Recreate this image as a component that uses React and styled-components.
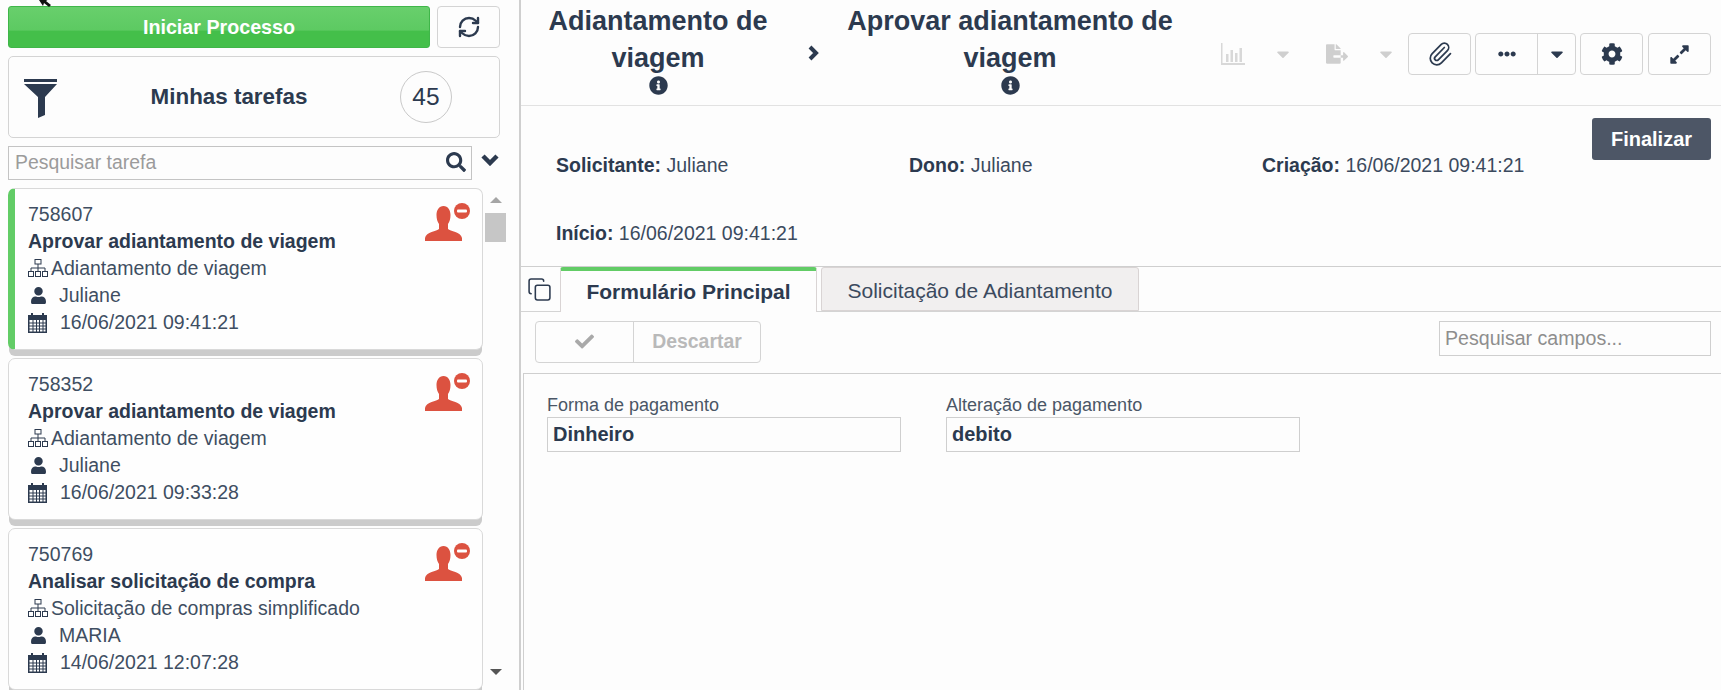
import React from 'react';
import styled, { createGlobalStyle } from 'styled-components';
import {
  FaCaretDown, FaCheck, FaCog, FaEllipsisH,
  FaExpandAlt, FaFileExport, FaInfoCircle, FaSearch, FaUser,
} from 'react-icons/fa';
import { Copy, Paperclip, RefreshCw } from 'lucide-react';

const GlobalStyle = createGlobalStyle`
  html, body {
    margin: 0;
    padding: 0;
    height: 690px;
    overflow: hidden;
    background: #fdfdfd;
    font-family: "Liberation Sans", Arial, sans-serif;
    color: #2c3a4f;
  }
  * { box-sizing: border-box; }
`;

const Page = styled.div`
  display: flex;
  position: relative;
  width: 1721px;
  height: 690px;
  overflow: hidden;
`;

const Cursor = styled.svg`
  position: absolute;
  left: 35px;
  top: -3px;
`;

/* left column */
const Sidebar = styled.aside`
  width: 521px;
  flex: none;
  padding: 6px 0 0 8px;
  border-right: 2px solid #cfcfcf;
  display: flex;
  flex-direction: column;
`;

const TopRow = styled.div`
  display: flex;
  gap: 7px;
  width: 492px;
`;

const StartButton = styled.button`
  flex: 1;
  height: 42px;
  border: 1px solid #3fb649;
  border-radius: 3px;
  background: linear-gradient(#68cf6c 0%, #5dca62 58%, #44bf4a 60%, #44bf4a 100%);
  color: #fff;
  font: bold 19.7px "Liberation Sans", Arial, sans-serif;
`;

const IconButton = styled.button`
  width: 63px;
  height: 42px;
  flex: none;
  display: flex;
  align-items: center;
  justify-content: center;
  border: 1px solid #d4d4d4;
  border-radius: 4px;
  background: #fdfdfd;
  color: #2c3a4f;
  padding: 0;
`;

const ExpandButton = styled(IconButton)`
  margin-left: 1px;
`;

const TasksBox = styled.div`
  width: 492px;
  height: 82px;
  margin-top: 8px;
  padding: 0 47px 0 15px;
  display: flex;
  align-items: center;
  border: 1px solid #d4d4d4;
  border-radius: 5px;
`;

const FunnelIcon = styled.svg`
  margin-top: 3px;
  flex: none;
`;

const TasksTitle = styled.div`
  flex: 1;
  text-align: center;
  font-size: 22.4px;
  font-weight: bold;
`;

const Counter = styled.div`
  width: 52px;
  height: 52px;
  display: flex;
  align-items: center;
  justify-content: center;
  border: 1px solid #c9c9c9;
  border-radius: 50%;
  font-size: 24.5px;
`;

const SearchRow = styled.div`
  display: flex;
  align-items: center;
  margin-top: 8px;
  width: 492px;
`;

const SearchBox = styled.div`
  width: 464px;
  height: 34px;
  padding: 0 5px 2px 6px;
  display: flex;
  align-items: center;
  justify-content: space-between;
  border: 1px solid #c4c4c4;
  font-size: 19.4px;
  color: #9b9b9b;
`;

const ChevronSlot = styled.div`
  flex: 1;
  display: flex;
  justify-content: flex-end;
  padding: 0 1px 6px 0;
`;

const ListArea = styled.div`
  display: flex;
  margin-top: 8px;
  gap: 2px;
  flex: 1;
  min-height: 0;
`;

const CardList = styled.div`
  width: 475px;
  display: flex;
  flex-direction: column;
  gap: 8px;
`;

const Card = styled.article`
  position: relative;
  flex: none;
  height: 162px;
  padding: 12px 0 0 ${props => (props.$active ? 13 : 19)}px;
  background: #fefefe;
  border: 1px solid #d9d9d9;
  border-left: ${props => (props.$active ? '7px solid #62cc66' : '1px solid #d9d9d9')};
  border-radius: 7px;
  box-shadow: 0 7px 0 -1px #cbcbcb;
  font-size: 19.5px;
  color: #3f4e62;
`;

const CardLine = styled.div`
  height: 27px;
  line-height: 27px;
  display: flex;
  align-items: center;
  white-space: nowrap;
`;

const CardTitle = styled(CardLine)`
  font-weight: bold;
  color: #2c3a4f;
`;

const LineIcon = styled.span`
  width: ${props => props.$width}px;
  flex: none;
  display: flex;
  align-items: center;
  color: #2c3a4f;
`;

const OwnerMark = styled.svg`
  position: absolute;
  right: 12px;
  top: 14px;
`;

const Scrollbar = styled.div`
  width: 21px;
  position: relative;
`;

const ScrollArrow = styled.div`
  position: absolute;
  left: 5px;
  width: 0;
  height: 0;
  border-left: 6px solid transparent;
  border-right: 6px solid transparent;
  ${props => (props.$down
    ? 'top: 481px; border-top: 6px solid #555;'
    : 'top: 9px; border-bottom: 6px solid #a5a5a5;')}
`;

const ScrollThumb = styled.div`
  margin-top: 25px;
  height: 29px;
  background: #c6c6c6;
`;

/* right column */
const Main = styled.main`
  flex: 1;
  min-width: 0;
  display: flex;
  flex-direction: column;
`;

const Header = styled.header`
  height: 106px;
  padding-right: 10px;
  display: flex;
  border-bottom: 1px solid #e2e2e2;
`;

const Crumb = styled.div`
  width: ${props => props.$width}px;
  flex: none;
  text-align: center;
  font-size: 27px;
  font-weight: bold;
  line-height: 37px;
  padding-top: 3px;
`;

const CrumbInfo = styled.div`
  height: 20px;
  margin-top: -1px;
  display: flex;
  justify-content: center;
`;

const CrumbArrow = styled.div`
  width: 39px;
  flex: none;
  padding: 45px 0 0 13px;
`;

const Tools = styled.div`
  margin-left: auto;
  padding-top: 33px;
  display: flex;
  align-items: flex-start;
  gap: 4px;
`;

const GhostTool = styled.div`
  width: ${props => props.$width}px;
  height: 42px;
  flex: none;
  display: flex;
  align-items: center;
  justify-content: center;
  color: #cfcfcf;
`;

const SplitButton = styled.div`
  width: 101px;
  height: 42px;
  flex: none;
  display: flex;
  border: 1px solid #d4d4d4;
  border-radius: 4px;
`;

const SplitPart = styled.div`
  width: ${props => props.$width}px;
  display: flex;
  align-items: center;
  justify-content: center;
  border-left: ${props => (props.$divided ? '1px solid #d4d4d4' : 'none')};
`;

const Details = styled.section`
  position: relative;
  height: 161px;
  padding: 49px 0 0 35px;
  display: grid;
  grid-template-columns: 353px 353px 1fr;
  grid-auto-rows: 68px;
  font-size: 19.5px;
  color: #3b4a5e;
  border-bottom: 1px solid #cfcfcf;
`;

const Detail = styled.div`
  line-height: 21px;

  strong {
    color: #2c3a4f;
  }
`;

const FinishButton = styled.button`
  position: absolute;
  right: 10px;
  top: 12px;
  width: 119px;
  height: 42px;
  border: none;
  border-radius: 3px;
  background: #4d5666;
  color: #fff;
  font: bold 20px "Liberation Sans", Arial, sans-serif;
`;

const TabBar = styled.div`
  height: 45px;
  display: flex;
  align-items: flex-end;
  border-bottom: 1px solid #d4d4d4;
`;

const CopySlot = styled.div`
  width: 39px;
  height: 44px;
  flex: none;
  padding: 10px 0 0 6px;
`;

const Tab = styled.div`
  height: ${props => (props.$active ? 45 : 44)}px;
  width: ${props => (props.$active ? 257 : 318)}px;
  margin-left: ${props => (props.$active ? 0 : 4)}px;
  margin-bottom: ${props => (props.$active ? -1 : 0)}px;
  padding-top: ${props => (props.$active ? 1 : 3)}px;
  display: flex;
  align-items: center;
  justify-content: center;
  font-size: 21px;
  font-weight: ${props => (props.$active ? 'bold' : 'normal')};
  color: ${props => (props.$active ? '#2c3a4f' : '#3b4a5e')};
  background: ${props => (props.$active ? '#fdfdfd' : '#f1efef')};
  border: 1px solid #d9d4d4;
  border-bottom: ${props => (props.$active ? 'none' : '1px solid #d9d4d4')};
  border-top: ${props => (props.$active ? '4px solid #62cc66' : '1px solid #d9d4d4')};
  border-radius: 3px 3px 0 0;
`;

const ActionBar = styled.div`
  height: 61px;
  padding: 9px 10px 0 14px;
  display: flex;
  justify-content: space-between;
  align-items: flex-start;
`;

const ActionGroup = styled.div`
  width: 226px;
  height: 42px;
  display: flex;
  border: 1px solid #d4d4d4;
  border-radius: 4px;
`;

const ActionPart = styled.div`
  width: ${props => props.$width}px;
  padding-bottom: 1px;
  display: flex;
  align-items: center;
  justify-content: center;
  border-left: ${props => (props.$divided ? '1px solid #d4d4d4' : 'none')};
  color: #b9b9b9;
  font-size: 19.4px;
  font-weight: bold;
`;

const FieldSearch = styled.div`
  width: 272px;
  height: 35px;
  padding-left: 5px;
  display: flex;
  align-items: center;
  border: 1px solid #cfcfcf;
  font-size: 19.6px;
  color: #8e8e8e;
`;

const FormArea = styled.div`
  flex: 1;
  margin-left: 2px;
  padding: 21px 0 0 23px;
  display: flex;
  gap: 45px;
  border-top: 1px solid #cfcfcf;
  border-left: 1px solid #cfcfcf;
`;

const Field = styled.div`
  width: 354px;
`;

const FieldLabel = styled.div`
  height: 22px;
  line-height: 20px;
  font-size: 18px;
  color: #4a5666;
`;

const FieldValue = styled.div`
  height: 35px;
  padding-left: 5px;
  display: flex;
  align-items: center;
  border: 1px solid #cfcfcf;
  font-size: 20px;
  font-weight: bold;
`;

const SitemapIcon = () => (
  <svg width="20" height="20" viewBox="0 0 20 20" fill="none" stroke="#2c3a4f" strokeWidth="1">
    <rect x="7" y="0.5" width="6" height="4.5" />
    <path d="M10 5v4M3 12V9h14v3M10 9v3" />
    <rect x="0.5" y="12.5" width="5" height="5" />
    <rect x="7.5" y="12.5" width="5" height="5" />
    <rect x="14.5" y="12.5" width="5" height="5" />
  </svg>
);

const CalendarIcon = () => (
  <svg width="19" height="20" viewBox="0 0 19 20" fill="#2c3a4f">
    <path d="M0 2h3V0h2v2h9V0h2v2h3v18H0zM1.5 7v11.5h16V7z" />
    <path d="M1 9.5h17v1H1zM1 12.5h17v1H1zM1 15.5h17v1H1zM4.5 7h1v12h-1zM8 7h1v12H8zM11 7h1v12h-1zM14.5 7h1v12h-1z" />
  </svg>
);

const ChartIcon = () => (
  <svg width="24" height="22" viewBox="0 0 24 22" fill="#d8d8d8">
    <path d="M0 0h1.5v20H24v2H0z" />
    <rect x="5" y="11" width="2.5" height="8" />
    <rect x="9.5" y="7" width="2.5" height="12" />
    <rect x="14" y="10" width="2.5" height="9" />
    <rect x="18.500" y="5" width="2.5" height="14" />
  </svg>
);

const tasks = [
  {
    id: '758607',
    title: 'Aprovar adiantamento de viagem',
    process: 'Adiantamento de viagem',
    user: 'Juliane',
    date: '16/06/2021 09:41:21',
    active: true,
  },
  {
    id: '758352',
    title: 'Aprovar adiantamento de viagem',
    process: 'Adiantamento de viagem',
    user: 'Juliane',
    date: '16/06/2021 09:33:28',
  },
  {
    id: '750769',
    title: 'Analisar solicitação de compra',
    process: 'Solicitação de compras simplificado',
    user: 'MARIA',
    date: '14/06/2021 12:07:28',
  },
];

const TaskCard = ({ task }) => (
  <Card $active={task.active}>
    <OwnerMark width="46" height="40" viewBox="0 0 46 40">
      <path
        d="M19.5 3c4.500 0 7 4 7 9 0 4-1 7-2.500 9v5c2 2 13 3 14 9v3H1v-3c1-6 12-7 14-9v-5c-1.500-2-2.500-5-2.500-9 0-5 2.500-9 7-9z"
        fill="#dc5240"
      />
      <circle cx="38" cy="8" r="8" fill="#dc5240" />
      <rect x="33" y="6.500" width="10" height="3" rx="1" fill="#fff" />
    </OwnerMark>
    <CardLine>{task.id}</CardLine>
    <CardTitle>{task.title}</CardTitle>
    <CardLine>
      <LineIcon $width={23}><SitemapIcon /></LineIcon>
      {task.process}
    </CardLine>
    <CardLine>
      <LineIcon $width={31}><FaUser size={17} style={{ marginLeft: 2 }} /></LineIcon>
      {task.user}
    </CardLine>
    <CardLine>
      <LineIcon $width={32}><CalendarIcon /></LineIcon>
      {task.date}
    </CardLine>
  </Card>
);

const App = () => {
  return (
    <Page>
      <GlobalStyle />
      <Cursor width="18" height="12" viewBox="0 0 18 12">
        <path d="M2 0l6 9 1-3 5 4 2-2-5-4 3-2z" fill="#111" />
      </Cursor>

      <Sidebar>
        <TopRow>
          <StartButton>Iniciar Processo</StartButton>
          <IconButton><RefreshCw size={24} strokeWidth={2.4} /></IconButton>
        </TopRow>

        <TasksBox>
          <FunnelIcon width="34" height="40" viewBox="0 0 34 40" fill="#2c3a4f">
            <rect x="0" y="0" width="33" height="3" />
            <path d="M0 5h33L21 18v18l-7 3V18z" />
          </FunnelIcon>
          <TasksTitle>Minhas tarefas</TasksTitle>
          <Counter>45</Counter>
        </TasksBox>

        <SearchRow>
          <SearchBox>
            Pesquisar tarefa
            <FaSearch size={20} color="#2c3a4f" />
          </SearchBox>
          <ChevronSlot>
            <svg width="18" height="12" viewBox="0 0 18 12" fill="none" stroke="#2c3a4f" strokeWidth="4.500">
              <path d="M2 2l7 7 7-7" />
            </svg>
          </ChevronSlot>
        </SearchRow>

        <ListArea>
          <CardList>
            {tasks.map(task => <TaskCard key={task.id} task={task} />)}
          </CardList>
          <Scrollbar>
            <ScrollArrow />
            <ScrollThumb />
            <ScrollArrow $down />
          </Scrollbar>
        </ListArea>
      </Sidebar>

      <Main>
        <Header>
          <Crumb $width={274}>
            Adiantamento de viagem
            <CrumbInfo><FaInfoCircle size={19} /></CrumbInfo>
          </Crumb>
          <CrumbArrow>
            <svg width="12" height="16" viewBox="0 0 12 16" fill="none" stroke="#2c3a4f" strokeWidth="4">
              <path d="M2 2l6 6-6 6" />
            </svg>
          </CrumbArrow>
          <Crumb $width={352}>
            Aprovar adiantamento de viagem
            <CrumbInfo><FaInfoCircle size={19} /></CrumbInfo>
          </Crumb>
          <Tools>
            <GhostTool $width={46}><ChartIcon /></GhostTool>
            <GhostTool $width={46}><FaCaretDown size={20} /></GhostTool>
            <GhostTool $width={54}><FaFileExport size={22} /></GhostTool>
            <GhostTool $width={36}><FaCaretDown size={20} /></GhostTool>
            <IconButton><Paperclip size={26} strokeWidth={1.6} /></IconButton>
            <SplitButton>
              <SplitPart $width={61}><FaEllipsisH size={18} /></SplitPart>
              <SplitPart $width={38} $divided><FaCaretDown size={20} /></SplitPart>
            </SplitButton>
            <IconButton><FaCog size={22} /></IconButton>
            <ExpandButton><FaExpandAlt size={21} /></ExpandButton>
          </Tools>
        </Header>

        <Details>
          <Detail><strong>Solicitante:</strong> Juliane</Detail>
          <Detail><strong>Dono:</strong> Juliane</Detail>
          <Detail><strong>Criação:</strong> 16/06/2021 09:41:21</Detail>
          <Detail><strong>Início:</strong> 16/06/2021 09:41:21</Detail>
          <FinishButton>Finalizar</FinishButton>
        </Details>

        <TabBar>
          <CopySlot><Copy size={25} strokeWidth={1.5} /></CopySlot>
          <Tab $active>Formulário Principal</Tab>
          <Tab>Solicitação de Adiantamento</Tab>
        </TabBar>

        <ActionBar>
          <ActionGroup>
            <ActionPart $width={97}><FaCheck size={19} color="#a9a9a9" /></ActionPart>
            <ActionPart $width={127} $divided>Descartar</ActionPart>
          </ActionGroup>
          <FieldSearch>Pesquisar campos...</FieldSearch>
        </ActionBar>

        <FormArea>
          <Field>
            <FieldLabel>Forma de pagamento</FieldLabel>
            <FieldValue>Dinheiro</FieldValue>
          </Field>
          <Field>
            <FieldLabel>Alteração de pagamento</FieldLabel>
            <FieldValue>debito</FieldValue>
          </Field>
        </FormArea>
      </Main>
    </Page>
  );
};

export default App;
